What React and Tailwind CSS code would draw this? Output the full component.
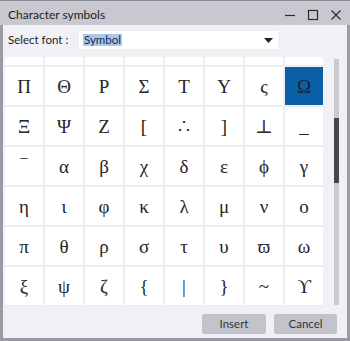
import React from 'react';

const ROWS = [
  ['', '', '', '', '', '', '', ''],
  ['Π', 'Θ', 'Ρ', 'Σ', 'Τ', 'Υ', 'ς', 'Ω'],
  ['Ξ', 'Ψ', 'Ζ', '[', '∴', ']', '⊥', '_'],
  ['‾', 'α', 'β', 'χ', 'δ', 'ε', 'ϕ', 'γ'],
  ['η', 'ι', 'φ', 'κ', 'λ', 'μ', 'ν', 'ο'],
  ['π', 'θ', 'ρ', 'σ', 'τ', 'υ', 'ϖ', 'ω'],
  ['ξ', 'ψ', 'ζ', '{', '|', '}', '~', 'ϒ'],
];

const uiFont = { fontFamily: 'Lato, "Noto Sans", sans-serif' };
const symFont = { fontFamily: '"Liberation Serif", "DejaVu Serif", serif' };

const TitleButtons = () => (
  <div className="flex items-center gap-[11px] pr-[5px]">
    {/* minimize */}
    <svg width="12" height="12" viewBox="0 0 12 12">
      <path d="M1 6.5h10" stroke="#2b2b2b" strokeWidth="1.2" />
    </svg>
    {/* maximize */}
    <svg width="12" height="12" viewBox="0 0 12 12">
      <rect x="1.5" y="1.5" width="9" height="9" fill="none" stroke="#2b2b2b" strokeWidth="1.2" />
    </svg>
    {/* close */}
    <svg width="12" height="12" viewBox="0 0 12 12">
      <path d="M1.5 1.5l9 9M10.5 1.5l-9 9" stroke="#2b2b2b" strokeWidth="1.2" />
    </svg>
  </div>
);

export default function App() {
  return (
    <div
      className="w-[350px] h-[341px] flex flex-col bg-[#9a9aa2] border-t border-[#8a8a92] px-[3px] pb-[3px]"
      style={uiFont}
    >
      {/* Title bar */}
      <div className="h-[24px] -mx-[3px] pl-[8px] pr-[3px] pt-[3px] flex items-center justify-between bg-[#c8c8d0] shrink-0">
        <span className="text-[12px] text-[#222]">Character symbols</span>
        <TitleButtons />
      </div>

      {/* Body */}
      <div className="flex-1 flex flex-col bg-[#f0f0f5] min-h-0">
        {/* Font row */}
        <div className="h-[30px] flex items-center pl-[5px]">
          <span className="w-[71px] text-[11.5px] text-[#222]">Select font :</span>
          <div className="w-[199px] h-[18px] bg-white flex items-center justify-between pl-[4px] pr-[5px]">
            <span className="bg-[#a8c8ee] text-[#1a2a4a] text-[11.5px] leading-[12px] px-[1px]">Symbol</span>
            <svg width="9" height="5" viewBox="0 0 9 5">
              <path d="M0 0h9L4.5 5z" fill="#222" />
            </svg>
          </div>
        </div>

        {/* Grid + scrollbar */}
        <div className="flex pl-[2px] pt-[2px]">
          <div className="w-[318px] h-[250px] overflow-hidden bg-[#eceef4]">
            <div className="-mt-[30px] flex flex-col gap-[2px]">
              {ROWS.map((row, r) => (
                <div key={r} className="flex gap-[2px]">
                  {row.map((ch, c) => {
                    const selected = r === 1 && c === 7;
                    return (
                      <div
                        key={c}
                        className={`w-[38px] h-[38px] flex items-center justify-center text-[19px] leading-none ${
                          selected ? 'bg-[#0b5fa6] text-[#1b2230]' : 'bg-white text-[#262626]'
                        } ${ch === '|' ? 'text-[#5a4f9a]' : ''}`}
                        style={symFont}
                      >
                        {ch}
                      </div>
                    );
                  })}
                </div>
              ))}
            </div>
          </div>
          <div className="ml-[11px] mt-[2px] w-[5px] h-[246px] bg-[#c9c9cf] flex flex-col">
            <div className="h-[59px]" />
            <div className="h-[65px] bg-[#46464c]" />
          </div>
        </div>

        {/* Footer */}
        <div className="flex-1 flex items-center justify-end gap-[8px] pr-[10px] pt-[2px]">
          <button className="w-[64px] h-[20px] bg-[#c3c3cb] rounded-[2px] text-[11.5px] text-[#333]">Insert</button>
          <button className="w-[63px] h-[20px] bg-[#c3c3cb] rounded-[2px] text-[11.5px] text-[#333]">Cancel</button>
        </div>
      </div>
    </div>
  );
}
